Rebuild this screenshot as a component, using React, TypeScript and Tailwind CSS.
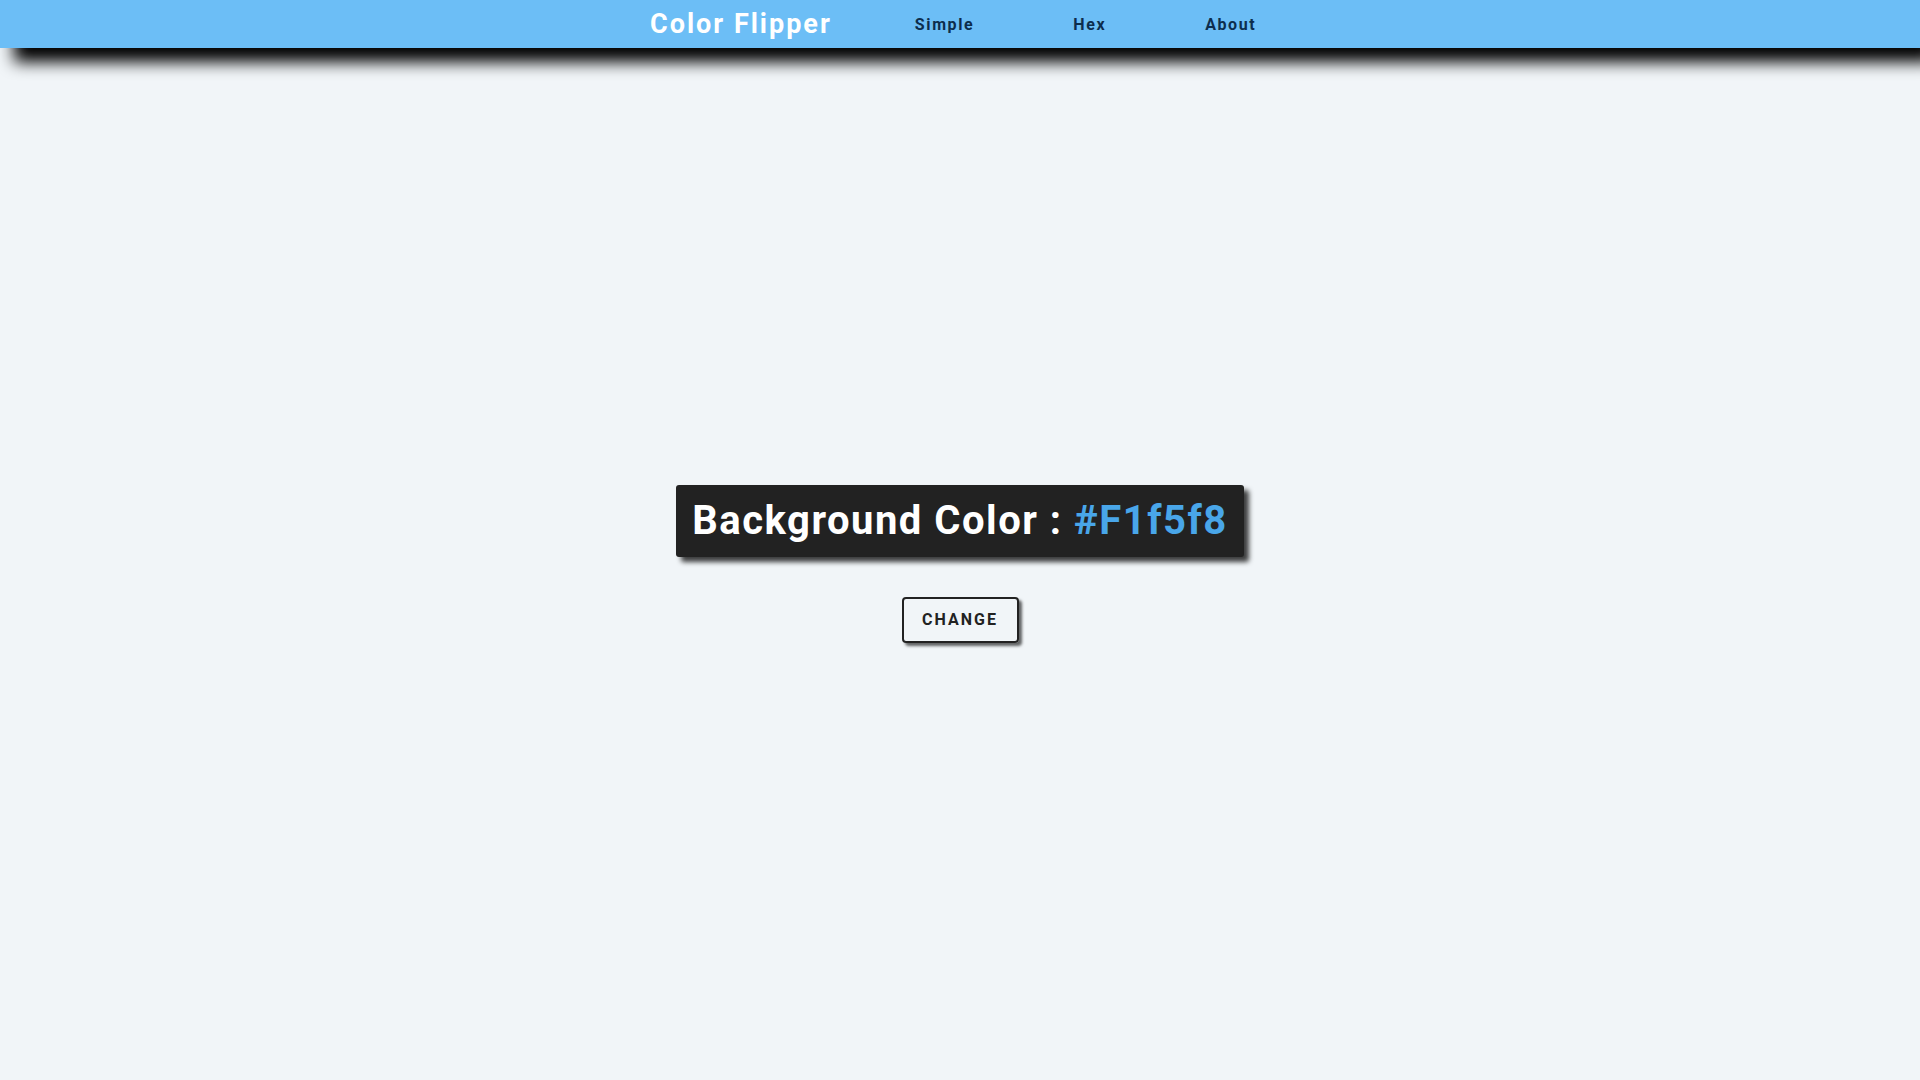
import React, { useState } from "react";

const colors = ["#F1f5f8", "#49a6e9", "#f15025", "#6cbef6", "#2caeba"];

export default function App() {
  const [idx, setIdx] = useState(0);
  const color = colors[idx];
  return (
    <div
      className="min-h-screen bg-[#f1f5f8] font-['Roboto',sans-serif]"
      style={{ backgroundColor: color }}
    >
      <nav className="h-[48px] bg-[#6cbef6] shadow-[14px_14px_16px_#000] relative z-10">
        <div className="w-[620px] mx-auto h-full flex items-center">
          <h4 className="shrink-0 whitespace-nowrap text-[27px] font-bold text-white tracking-[2px] leading-none m-0 pt-[1px]">
            Color Flipper
          </h4>
          <ul className="flex shrink-0 items-center ml-[33px] pt-[1px]">
            <li>
              <a className="block pl-[50px] pr-[49px] text-[16px] font-bold tracking-[1.6px] text-[#0c2d4d]">
                Simple
              </a>
            </li>
            <li>
              <a className="block pl-[50px] pr-[49px] text-[16px] font-bold tracking-[1.6px] text-[#0c2d4d]">
                Hex
              </a>
            </li>
            <li>
              <a className="block px-[50px] text-[16px] font-bold tracking-[1.6px] text-[#0c2d4d]">
                About
              </a>
            </li>
          </ul>
        </div>
      </nav>
      <main className="min-h-[calc(100vh-48px)] flex flex-col items-center justify-center">
        <h2 className="bg-[#222222] text-white rounded-[3px] px-[16px] py-[12px] text-[40px] leading-[48px] font-bold tracking-[1.5px] shadow-[5px_5px_5px_rgba(0,0,0,0.75)]">
          Background Color : <span className="text-[#49a6e9]">{color}</span>
        </h2>
        <button
          onClick={() => setIdx((idx + 1) % colors.length)}
          className="mt-[40px] w-[117px] h-[46px] border-2 border-[#222222] rounded-[4px] bg-transparent text-[#222222] text-[16px] font-bold tracking-[2px] uppercase shadow-[3px_3px_3px_rgba(0,0,0,0.6)]"
        >
          Change
        </button>
      </main>
    </div>
  );
}
